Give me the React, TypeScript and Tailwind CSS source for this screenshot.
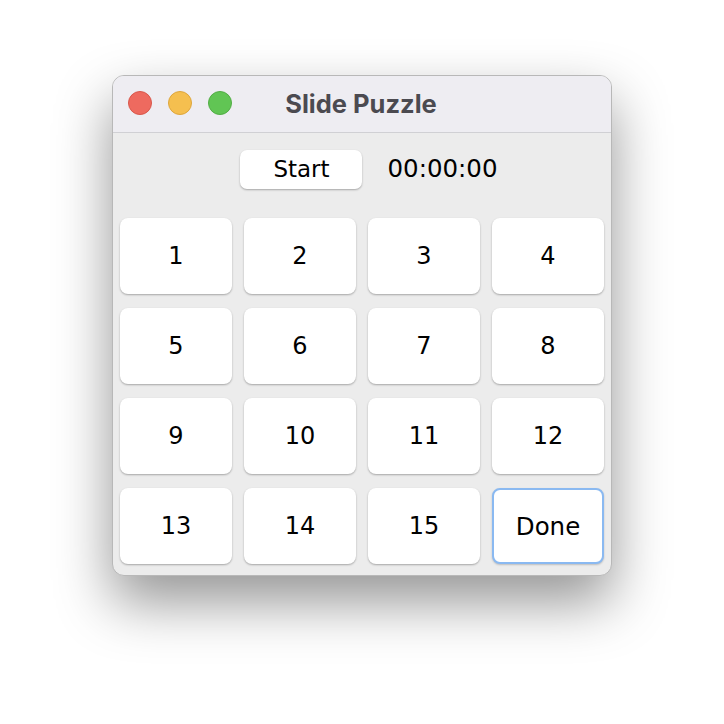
const tiles = ["1", "2", "3", "4", "5", "6", "7", "8", "9", "10", "11", "12", "13", "14", "15"];

export default function App() {
  return (
    <div className="flex h-[724px] w-[724px] items-start justify-center bg-white pt-[75px]">
      <div className="flex h-[501px] w-[500px] flex-col overflow-hidden rounded-[12px] border border-[#b8b8b8] bg-[#ececec] shadow-[0_26px_56px_rgba(0,0,0,0.42)]">
        <div className="relative flex h-[57px] shrink-0 items-center justify-center border-b border-[#d0d0d4] bg-[#eeedf2]">
          <div className="absolute left-[15px] top-[15px] flex gap-[16px]">
            <span className="h-[24px] w-[24px] rounded-full border border-[#d9574b] bg-[#ee6a5f]" />
            <span className="h-[24px] w-[24px] rounded-full border border-[#dea63c] bg-[#f5bf4f]" />
            <span className="h-[24px] w-[24px] rounded-full border border-[#52ad45] bg-[#61c554]" />
          </div>
          <span className="pr-[2px] font-['Inter',sans-serif] text-[25.5px] font-bold text-[#4b4a50]">Slide Puzzle</span>
        </div>
        <div className="flex h-[85px] shrink-0 items-start justify-center gap-[25px] pl-[14px] pt-[17px]">
          <button className="h-[39px] w-[122px] rounded-[7px] bg-white font-['DejaVu_Sans',sans-serif] text-[23px] text-black shadow-[0_1px_2px_rgba(0,0,0,0.3)]">
            Start
          </button>
          <span className="flex h-[39px] items-center font-['DejaVu_Sans',sans-serif] text-[24.5px] text-black">00:00:00</span>
        </div>
        <div className="grid grid-cols-4 gap-x-[12px] gap-y-[14px] px-[7px]">
          {tiles.map((t) => (
            <button
              key={t}
              className="h-[76px] rounded-[8px] bg-white font-['DejaVu_Sans',sans-serif] text-[24px] text-black shadow-[0_1px_2px_rgba(0,0,0,0.3)]"
            >
              {t}
            </button>
          ))}
          <button className="h-[76px] rounded-[8px] border-[2px] border-[#8ab9f1] bg-white pt-[3px] font-['DejaVu_Sans',sans-serif] text-[24.5px] text-black shadow-[0_1px_2px_rgba(0,0,0,0.2)]">
            Done
          </button>
        </div>
      </div>
    </div>
  );
}
